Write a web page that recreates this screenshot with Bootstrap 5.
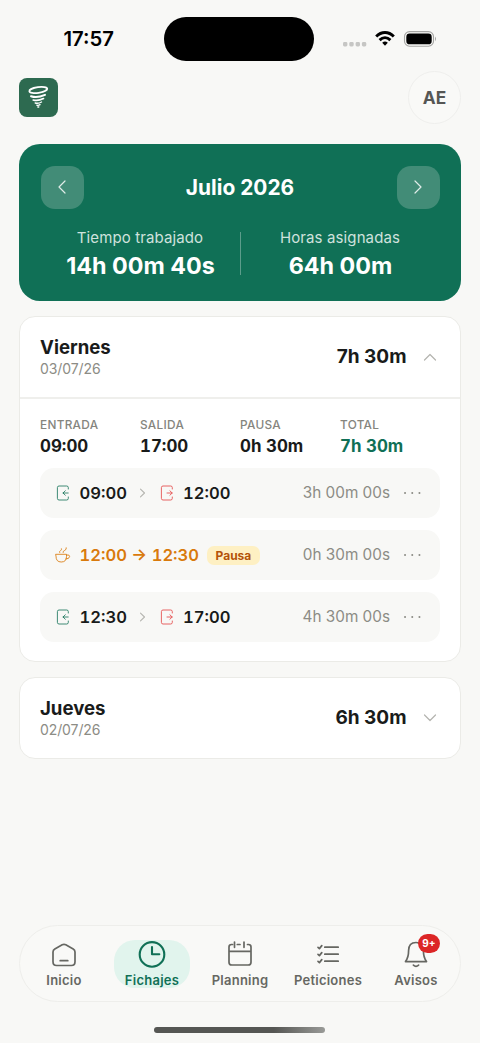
<!DOCTYPE html>
<html lang="es">
<head>
<meta charset="utf-8">
<meta name="viewport" content="width=device-width, initial-scale=1">
<title>Fichajes</title>
<link href="https://cdn.jsdelivr.net/npm/bootstrap@5.3.0/dist/css/bootstrap.min.css" rel="stylesheet">
<style>
body{font-family:Inter,"Liberation Sans",sans-serif;background:#f8f8f6;color:#191b1a;height:1043px;overflow:hidden}
svg{display:block;fill:none;stroke:currentColor;stroke-linecap:round;stroke-linejoin:round;flex:none}
.screen{width:480px;height:1043px}
.statusbar{height:70px;padding:16.5px 41px 0 63.5px}
.clock{font-size:20.3px;font-weight:600;line-height:24px;color:#000;width:101.5px;padding-top:10.4px}
.island{width:150px;height:44.5px;border-radius:23px;background:#000}
.status-icons{margin-left:29.5px;margin-top:13.5px}
.topbar{height:54px;padding:0 19px}
.logo{width:39px;height:39px;border-radius:8px;background:#2d6a50;color:#fff}
.avatar{width:53px;height:53px;border:1px solid #efefed;background:#f9f9f7;color:#555654;font-size:17.3px;font-weight:700;padding-top:1px}
.summary{margin:20px 19px 0;height:157px;border-radius:21px;background:#107056;color:#fff;padding:21.5px 21.5px 0}
.stepper{width:43px;height:43px;border-radius:14px;background:#428c77;color:#e0ece8;padding:0;border:0}
.month{font-size:20.9px;font-weight:700;line-height:26px;padding-top:1px}
.stats{margin-top:19.5px}
.stat-name{font-size:15px;line-height:20px;color:#cfe2dd;letter-spacing:.12px}
.stat-value{font-size:23.3px;font-weight:700;line-height:30px;margin-top:3px;padding-left:1px}
.stat-rule{width:1px;height:43px;background:#5c9d8b;margin-top:4px}
.daycard{margin:15px 19px 0;border:1.5px solid #ebebe7;border-radius:16px;background:#fff}
.dayhead{height:80px;padding:0 22px 0 20px}
.dayname{font-size:18.6px;font-weight:700;line-height:24px}
.daydate{font-size:14px;line-height:20px;color:#8c8c85;letter-spacing:-.1px}
.daytotal{font-size:19px;font-weight:700;line-height:24px}
.dayhead svg{margin-left:15.5px}
.daybody{border-top:2px solid #efefec;padding:17px 20px 19px}
.k{font-size:11.8px;font-weight:500;letter-spacing:.3px;line-height:19px;color:#85857e}
.v{font-size:16.9px;font-weight:700;line-height:22px;font-feature-settings:"tnum"}
.slot{height:50px;border-radius:14px;background:#f8f8f6;padding:0 17px 0 15px;margin-top:12px}
.row + .slot{margin-top:11px}
.slot-time{font-size:16.6px;font-weight:600;font-feature-settings:"tnum"}
.slot-time.first{margin-left:8.5px;width:54.5px}
.slot-length{font-size:15.3px;color:#8c8c85}
.dots{margin-left:12px;color:#8c8c85}
.pausa{background:#fef0c3;color:#b45309;font-size:12px;font-weight:700;line-height:19px;border-radius:7px;padding:0 8.5px}
.green{color:#107056}.orange{color:#d97a0c}.red{color:#e55353}.faint{color:#b4b4af}
.tabs{height:77px;margin:0 19px;border:1.5px solid #eeeeeb;border-radius:39px;background:#f9f9f7;padding:12px 0 0}
.tabitem{width:88px;color:#666762;font-size:13px;font-weight:600;letter-spacing:.25px;line-height:20px}
.tabitem .pic{height:32px}
.tabon{color:#107056}
.tabon .pill{width:76px;height:48px;border-radius:21px;background:#e1f4ed}
.count{position:absolute;left:46px;top:-4px;width:22px;height:19px;border-radius:10px;background:#dc2626;color:#fff;font-size:10px;font-weight:700;line-height:19px;letter-spacing:0;text-align:center}
.homebar{width:171px;height:6px;margin:25px 0 10px 154px;border-radius:3px;background:linear-gradient(90deg,#555653 0%,#555653 70%,#999a97 100%)}
</style>
</head>
<body>
<div class="screen d-flex flex-column">
  <div class="statusbar d-flex align-items-start">
    <div class="clock">17:57</div>
    <div class="island"></div>
    <div class="status-icons">
      <svg width="96" height="18" viewBox="0 0 96 18" style="stroke:none">
        <g fill="#c6c6c4"><rect x="0" y="12" width="4.4" height="4.4" rx="1.4"/><rect x="6.3" y="12" width="4.4" height="4.4" rx="1.4"/><rect x="12.6" y="12" width="4.4" height="4.4" rx="1.4"/><rect x="18.9" y="12" width="4.4" height="4.4" rx="1.4"/></g>
        <g stroke="#000" stroke-linecap="butt" stroke-width="2.9"><path d="M33.2 6.5C38.4 1.2 45.6 1.2 50.8 6.5"/><path d="M36.6 10.1C39.9 6.8 44.1 6.8 47.4 10.1"/></g>
        <path d="M39.2 12.8Q42 10.4 44.8 12.8L42 15.7Z" fill="#000"/>
        <rect x="61.5" y="1.6" width="29" height="14.6" rx="5" stroke="#a5a5a3" stroke-width="1.1"/>
        <rect x="63.3" y="3.6" width="25.4" height="10.7" rx="3.4" fill="#000"/>
        <path d="M92 6.6Q94 8.9 92 11.2Z" fill="#a5a5a3"/>
      </svg>
    </div>
  </div>
  <div class="topbar d-flex justify-content-between align-items-center">
    <div class="logo d-flex align-items-center justify-content-center">
      <svg width="39" height="39" viewBox="0 0 39 39"><ellipse cx="19.3" cy="12" rx="9" ry="2.8" stroke-width="1.8" transform="rotate(-8 19.3 12)"/><path d="M12 18.2Q18 20.4 26 16.8" stroke-width="2"/><path d="M14.2 22Q19 23.4 24.5 20.6" stroke-width="1.7"/><path d="M16.2 25Q19.5 25.9 22.5 24M17.8 27.2Q19.5 27.7 21 26.7" stroke-width="1.4"/><path d="M18.8 29H19.8" stroke-width="1.3"/></svg>
    </div>
    <div class="avatar rounded-circle d-flex align-items-center justify-content-center">AE</div>
  </div>

  <section class="summary">
    <div class="d-flex justify-content-between align-items-center">
      <button class="stepper d-flex align-items-center justify-content-center" aria-label="Mes anterior"><svg width="10" height="16" viewBox="0 0 10 16" stroke-width="1.2"><path d="M8 2 2 8 8 14"/></svg></button>
      <div class="month">Julio 2026</div>
      <button class="stepper d-flex align-items-center justify-content-center" aria-label="Mes siguiente"><svg width="10" height="16" viewBox="0 0 10 16" stroke-width="1.2"><path d="M2 2 8 8 2 14"/></svg></button>
    </div>
    <div class="stats d-flex text-center">
      <div class="flex-fill w-50"><div class="stat-name">Tiempo trabajado</div><div class="stat-value">14h 00m 40s</div></div>
      <div class="stat-rule"></div>
      <div class="flex-fill w-50"><div class="stat-name">Horas asignadas</div><div class="stat-value">64h 00m</div></div>
    </div>
  </section>

  <section class="daycard">
    <div class="dayhead d-flex align-items-center">
      <div class="me-auto"><div class="dayname">Viernes</div><div class="daydate">03/07/26</div></div>
      <div class="daytotal">7h 30m</div>
      <svg class="faint" width="16" height="10" viewBox="0 0 16 10" stroke-width="1.2"><path d="M2.5 8 8 2.5 13.5 8"/></svg>
    </div>
    <div class="daybody">
      <div class="row g-0">
        <div class="col-3"><div class="k">ENTRADA</div><div class="v">09:00</div></div>
        <div class="col-3"><div class="k">SALIDA</div><div class="v">17:00</div></div>
        <div class="col-3"><div class="k">PAUSA</div><div class="v">0h 30m</div></div>
        <div class="col-3"><div class="k">TOTAL</div><div class="v green">7h 30m</div></div>
      </div>
      <div class="slot d-flex align-items-center">
        <svg class="green" width="16" height="16" viewBox="0 0 16 16" stroke-width=".8"><path d="M13.3 4V2.6Q13.3 1 11.7 1H4Q2.4 1 2.4 2.6V13.4Q2.4 15 4 15H11.7Q13.3 15 13.3 13.4V12M13.2 8H8M10.3 5.8 8 8 10.3 10.2"/></svg>
        <span class="slot-time first">09:00</span>
        <svg class="faint" style="margin-left:4px" width="10" height="12" viewBox="0 0 10 12" stroke-width="1.1"><path d="M2.5 2.2 6.5 6 2.5 9.8"/></svg>
        <svg class="red" style="margin-left:10.7px" width="16" height="16" viewBox="0 0 16 16" stroke-width=".9"><path d="M13.3 4V2.6Q13.3 1 11.7 1H4Q2.4 1 2.4 2.6V13.4Q2.4 15 4 15H11.7Q13.3 15 13.3 13.4V12M8 8H13.2M10.9 5.8 13.2 8 10.9 10.2"/></svg>
        <span class="slot-time" style="margin-left:8.3px">12:00</span>
        <span class="slot-length ms-auto">3h 00m 00s</span>
        <svg class="dots" width="21" height="6" viewBox="0 0 21 6" stroke-width="1.9"><path d="M3 3h.1M10.2 3h.1M17.4 3h.1"/></svg>
      </div>
      <div class="slot d-flex align-items-center">
        <svg class="orange" width="16" height="16" viewBox="0 0 16 16" stroke-width=".85"><path d="M1 7.3H11.5V9.6Q11.5 15 6.2 15 1 15 1 9.6ZM11.5 8Q14.6 7.2 14.6 9.5 14.4 12 10.8 12M4.6 5.5Q4.1 4.4 5.6 3.6 6.8 3 6.5 1.8M8 5.5Q7.5 4.4 9.7 3.4 11.7 2.6 11.3.8"/></svg>
        <span class="slot-time orange" style="margin-left:8.5px">12:00 → 12:30</span>
        <span class="pausa" style="margin-left:8px">Pausa</span>
        <span class="slot-length ms-auto">0h 30m 00s</span>
        <svg class="dots" width="21" height="6" viewBox="0 0 21 6" stroke-width="1.9"><path d="M3 3h.1M10.2 3h.1M17.4 3h.1"/></svg>
      </div>
      <div class="slot d-flex align-items-center">
        <svg class="green" width="16" height="16" viewBox="0 0 16 16" stroke-width=".8"><path d="M13.3 4V2.6Q13.3 1 11.7 1H4Q2.4 1 2.4 2.6V13.4Q2.4 15 4 15H11.7Q13.3 15 13.3 13.4V12M13.2 8H8M10.3 5.8 8 8 10.3 10.2"/></svg>
        <span class="slot-time first">12:30</span>
        <svg class="faint" style="margin-left:4px" width="10" height="12" viewBox="0 0 10 12" stroke-width="1.1"><path d="M2.5 2.2 6.5 6 2.5 9.8"/></svg>
        <svg class="red" style="margin-left:10.7px" width="16" height="16" viewBox="0 0 16 16" stroke-width=".9"><path d="M13.3 4V2.6Q13.3 1 11.7 1H4Q2.4 1 2.4 2.6V13.4Q2.4 15 4 15H11.7Q13.3 15 13.3 13.4V12M8 8H13.2M10.9 5.8 13.2 8 10.9 10.2"/></svg>
        <span class="slot-time" style="margin-left:8.3px">17:00</span>
        <span class="slot-length ms-auto">4h 30m 00s</span>
        <svg class="dots" width="21" height="6" viewBox="0 0 21 6" stroke-width="1.9"><path d="M3 3h.1M10.2 3h.1M17.4 3h.1"/></svg>
      </div>
    </div>
  </section>

  <section class="daycard">
    <div class="dayhead d-flex align-items-center">
      <div class="me-auto"><div class="dayname">Jueves</div><div class="daydate">02/07/26</div></div>
      <div class="daytotal">6h 30m</div>
      <svg class="faint" width="16" height="10" viewBox="0 0 16 10" stroke-width="1.2"><path d="M2.5 2 8 7.5 13.5 2"/></svg>
    </div>
  </section>

  <nav class="tabs d-flex mt-auto text-center">
    <div class="tabitem"><div class="pic d-flex justify-content-center"><svg width="32" height="32" viewBox="0 0 32 32" stroke-width="1.7"><path d="M14.2 6.3Q16 5.3 17.8 6.3L25.2 10.4Q27 11.4 27 13.4V23.2Q27 27 23.4 27H8.6Q5 27 5 23.2V13.4Q5 11.4 6.8 10.4ZM12.2 22.2H19.8" transform="translate(0 .5)"/></svg></div>Inicio</div>
    <div class="tabitem tabon position-relative"><div class="pill position-absolute start-50 translate-middle-x" style="top:2px"></div><div class="position-relative"><div class="pic d-flex justify-content-center"><svg width="32" height="32" viewBox="0 0 32 32" stroke-width="2.1"><circle cx="16" cy="16.4" r="12.3"/><path d="M16 9V16.2H23.3"/></svg></div>Fichajes</div></div>
    <div class="tabitem"><div class="pic d-flex justify-content-center"><svg width="32" height="32" viewBox="0 0 32 32" stroke-width="1.7"><path d="M8.5 6.5H7.5Q5 6.5 5 9V24.2Q5 27 7.8 27H24.2Q27 27 27 24.2V9Q27 6.5 24.5 6.5H23.5M13.3 6.5H16M5 13.4H27M10.5 4V9.3M20 4V9.3"/></svg></div>Planning</div>
    <div class="tabitem"><div class="pic d-flex justify-content-center"><svg width="32" height="32" viewBox="0 0 32 32" stroke-width="1.7"><path d="M12.8 9.2H26.2M12.8 16.2H26.2M12.8 23.2H26.2M6 9.4 7.4 10.6 9.8 7.6M6 16.4 7.4 17.6 9.8 14.6M6 23.4 7.4 24.6 9.8 21.6"/></svg></div>Peticiones</div>
    <div class="tabitem position-relative"><div class="pic d-flex justify-content-center"><svg width="32" height="32" viewBox="0 0 32 32" stroke-width="1.7"><path d="M5.5 23.6Q8.6 19.6 8.6 12.6 8.6 4.5 16 4.5 23.4 4.5 23.4 12.6 23.4 19.6 26.5 23.6ZM13.4 27.2Q16 29.6 18.6 27.2"/></svg></div>Avisos<span class="count">9+</span></div>
  </nav>
  <div class="homebar"></div>
</div>
<script src="https://cdn.jsdelivr.net/npm/bootstrap@5.3.0/dist/js/bootstrap.bundle.min.js"></script>
</body>
</html>
